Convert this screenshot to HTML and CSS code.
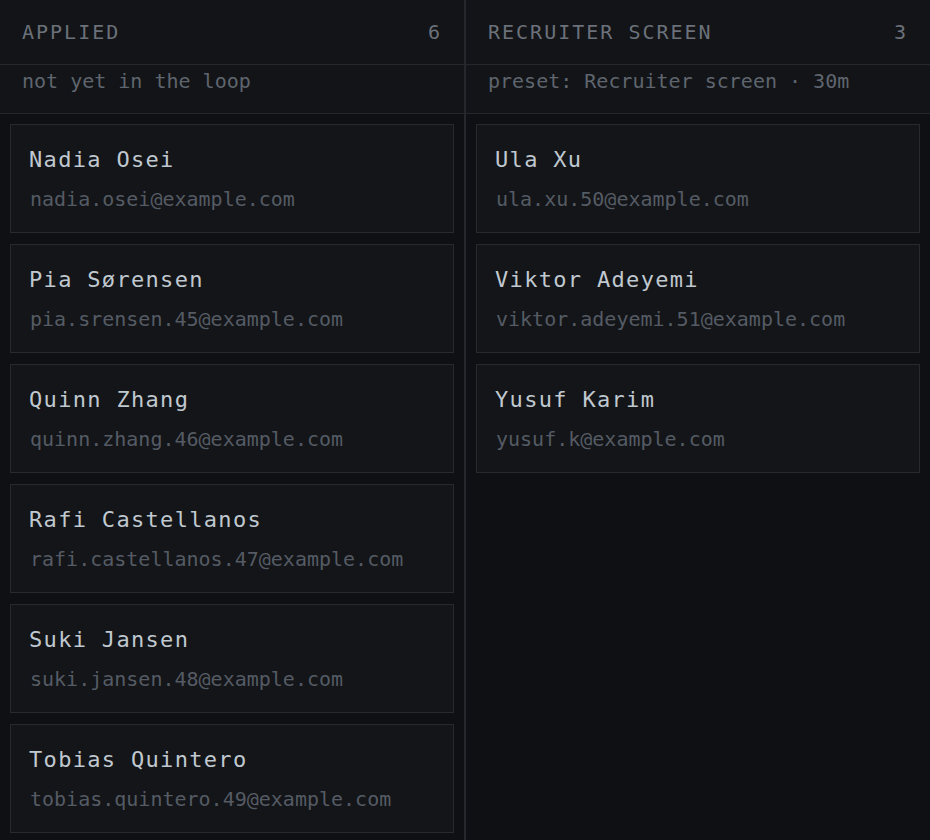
FILE: index.html
```html
<!DOCTYPE html>
<html lang="en">
<head>
<meta charset="utf-8">
<title>Pipeline</title>
<link rel="stylesheet" href="styles.css">
</head>
<body>
<div class="board">
  <section class="column">
    <header class="col-head">
      <span class="col-title">APPLIED</span>
      <span class="col-count">6</span>
    </header>
    <div class="col-sub">not yet in the loop</div>
    <div class="cards">
      <div class="card"><div class="name">Nadia Osei</div><div class="email">nadia.osei@example.com</div></div>
      <div class="card"><div class="name">Pia Sørensen</div><div class="email">pia.srensen.45@example.com</div></div>
      <div class="card"><div class="name">Quinn Zhang</div><div class="email">quinn.zhang.46@example.com</div></div>
      <div class="card"><div class="name">Rafi Castellanos</div><div class="email">rafi.castellanos.47@example.com</div></div>
      <div class="card"><div class="name">Suki Jansen</div><div class="email">suki.jansen.48@example.com</div></div>
      <div class="card"><div class="name">Tobias Quintero</div><div class="email">tobias.quintero.49@example.com</div></div>
    </div>
  </section>
  <section class="column">
    <header class="col-head">
      <span class="col-title">RECRUITER SCREEN</span>
      <span class="col-count">3</span>
    </header>
    <div class="col-sub">preset: Recruiter screen · 30m</div>
    <div class="cards">
      <div class="card"><div class="name">Ula Xu</div><div class="email">ula.xu.50@example.com</div></div>
      <div class="card"><div class="name">Viktor Adeyemi</div><div class="email">viktor.adeyemi.51@example.com</div></div>
      <div class="card"><div class="name">Yusuf Karim</div><div class="email">yusuf.k@example.com</div></div>
    </div>
  </section>
</div>
</body>
</html>
```
FILE: styles.css
```css
* { box-sizing: border-box; }
html, body {
  margin: 0;
  padding: 0;
  height: 100%;
  background: #0f1013;
  overflow: hidden;
}
body {
  font-family: "DejaVu Sans Mono", monospace;
}
.board {
  display: grid;
  grid-template-columns: 465px 465px;
  height: 840px;
}
.column {
  display: flex;
  flex-direction: column;
  background: #121417;
}
.column:first-child {
  border-right: 1px solid #24272c;
}
.column:last-child {
  border-left: 1px solid #24272c;
}
.col-head {
  height: 65px;
  display: flex;
  align-items: center;
  justify-content: space-between;
  padding: 0 24px 0 22px;
  border-bottom: 1px solid #24272c;
  color: #6b717a;
  font-size: 20px;
  letter-spacing: 0.1em;
}
.col-count {
  letter-spacing: 0;
}
.col-sub {
  height: 49px;
  padding: 4px 22px 0;
  border-bottom: 1px solid #24272c;
  color: #5f656e;
  font-size: 20px;
  line-height: 24px;
}
.cards {
  display: flex;
  flex-direction: column;
  gap: 11px;
  padding: 10px;
  background: #0f1013;
  flex: 1;
}
.card {
  border: 1px solid #26292e;
  background: #131518;
  padding: 22px 18px 21px;
}
.name {
  color: #c0c8d0;
  font-size: 22px;
  line-height: 26px;
  letter-spacing: 0.06em;
}
.email {
  margin-top: 14px;
  padding-left: 1px;
  color: #555b64;
  font-size: 20px;
  line-height: 24px;
}
```
